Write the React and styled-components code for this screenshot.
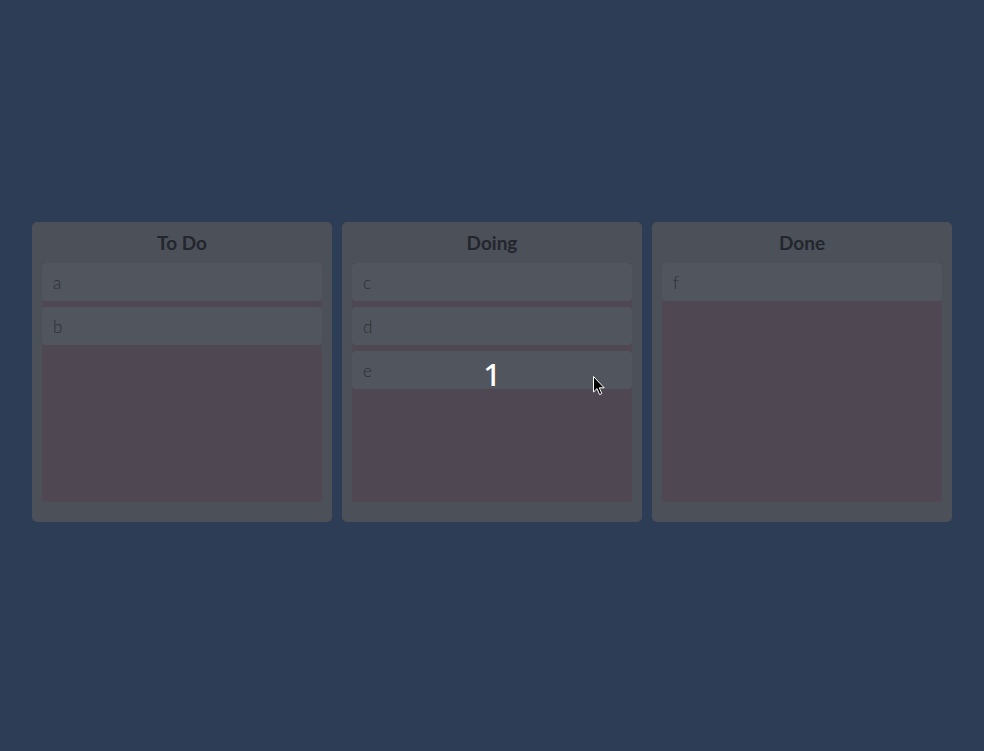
import React from "react";
import styled, { createGlobalStyle } from "styled-components";

const Global = createGlobalStyle`
  html, body { margin: 0; padding: 0; background: #2e3d56; }
  body { font-family: "Lato", "Noto Sans", sans-serif; }
`;

const Page = styled.div`
  width: 984px;
  height: 751px;
  box-sizing: border-box;
  padding-top: 222px;
  display: flex;
  justify-content: center;
  align-items: flex-start;
`;

const Board = styled.div`
  display: flex;
  gap: 10px;
`;

const Column = styled.div`
  width: 300px;
  height: 300px;
  box-sizing: border-box;
  background: #4b5059;
  border-radius: 5px;
  padding: 0 10px 20px;
  display: flex;
  flex-direction: column;
`;

const Title = styled.h2`
  margin: 0;
  height: 41px;
  line-height: 42px;
  text-align: center;
  font-size: 19px;
  font-weight: 700;
  color: #23262d;
`;

const DropZone = styled.div`
  flex: 1;
  background: #4f4853;
  display: flex;
  flex-direction: column;
  gap: 6px;
  position: relative;
`;

const Card = styled.div`
  position: relative;
  height: 38px;
  box-sizing: border-box;
  background: #51555d;
  border-radius: 4px;
  padding: 0 11px;
  display: flex;
  align-items: center;
  font-size: 17px;
  font-weight: 300;
  color: #2b2f36;
`;

const Count = styled.div`
  position: absolute;
  left: 50%;
  top: 50%;
  transform: translate(-50%, -36%);
  font-family: "Noto Sans", sans-serif;
  font-weight: 500;
  font-size: 31px;
  color: #ffffff;
  line-height: 1;
`;

const Cursor = styled.svg`
  position: absolute;
  left: 241px;
  top: 25px;
  width: 13px;
  height: 20px;
`;

const columns = [
  { title: "To Do", cards: ["a", "b"] },
  { title: "Doing", cards: ["c", "d", "e"] },
  { title: "Done", cards: ["f"] },
];

export default function App() {
  return (
    <>
      <Global />
      <Page>
        <Board>
          {columns.map((col) => (
            <Column key={col.title}>
              <Title>{col.title}</Title>
              <DropZone>
                {col.cards.map((c) => (
                  <Card key={c}>
                    {c}
                    {c === "e" && (
                      <>
                        <Count>1</Count>
                        <Cursor viewBox="0 0 13 20">
                          <path
                            d="M0.5 0.5 L0.5 16 L4 12.6 L6.6 18.6 L8.8 17.6 L6.3 11.8 L11.2 11.8 Z"
                            fill="#000"
                            stroke="#fff"
                            strokeWidth="1"
                          />
                        </Cursor>
                      </>
                    )}
                  </Card>
                ))}
              </DropZone>
            </Column>
          ))}
        </Board>
      </Page>
    </>
  );
}
